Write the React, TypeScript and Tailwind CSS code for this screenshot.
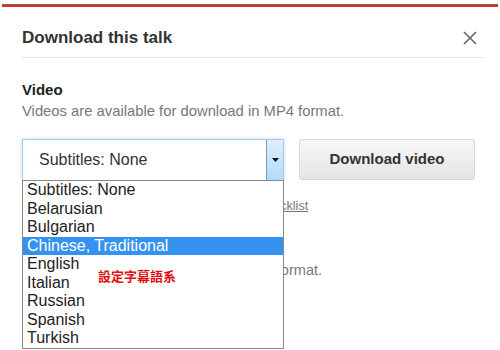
const subtitleOptions = [
  'Subtitles: None',
  'Belarusian',
  'Bulgarian',
  'Chinese, Traditional',
  'English',
  'Italian',
  'Russian',
  'Spanish',
  'Turkish',
];

export default function App() {
  return (
    <div className="relative h-[350px] w-[500px] overflow-hidden bg-white font-['Liberation_Sans',Arial,sans-serif] text-[#333]">
      <div className="px-[2px] pt-[4px]">
        <div className="h-[1px] bg-[#666]" />
        <div className="h-[2px] bg-[#e62b1e]" />
      </div>

      <div className="pl-[22px] pr-[16px]">
        <div className="flex items-center justify-between border-b border-[#e6e6e6] pb-[8px] pt-[20px]">
          <h2 className="text-[17px] font-bold leading-[22px] text-[#333]">Download this talk</h2>
          <svg width="16" height="16" viewBox="0 0 16 16" className="mr-[6px]" aria-hidden>
            <path d="M2 2 L14 14 M14 2 L2 14" stroke="#666" strokeWidth="1.6" />
          </svg>
        </div>

        <div className="pt-[23px]">
          <h3 className="text-[15px] font-bold leading-[18px] text-[#222]">Video</h3>
          <p className="mt-[3px] text-[14.8px] leading-[18px] text-[#777]">Videos are available for download in MP4 format.</p>
        </div>

        <div className="mt-[19px] flex gap-[15px]">
          <div className="flex h-[42px] w-[262px] border border-[#a9cbe8] bg-white shadow-[0_0_3px_rgba(120,170,220,0.5)]">
            <div className="flex flex-1 items-center pl-[16px] text-[16px] text-[#333]">Subtitles: None</div>
            <div className="flex w-[17px] items-center justify-center border-l border-[#6d9fcf] bg-gradient-to-b from-[#dcefff] to-[#b5daf6]">
              <svg width="7" height="4" viewBox="0 0 7 4" aria-hidden>
                <path d="M0 0 H7 L3.5 4 Z" fill="#111" />
              </svg>
            </div>
          </div>
          <button className="h-[41px] w-[176px] rounded-[3px] border border-[#d6d6d6] bg-gradient-to-b from-[#f7f7f7] to-[#e5e5e5] text-[15px] font-bold text-[#333]">
            Download video
          </button>
        </div>

        <p className="mt-[17px] text-[12.75px] leading-[16px] text-[#777]">
          <span className="underline">Please read about our subtitles download checklist</span>
        </p>

        <div className="pt-[26px]">
          <h3 className="text-[15px] font-bold leading-[18px] text-[#222]">Audio</h3>
          <p className="mt-[3px] text-[14.6px] leading-[18px] text-[#777]">Audio is available for download in MP3 format.</p>
        </div>
      </div>

      <ul className="absolute left-[22px] top-[180px] w-[262px] border border-[#8a8a8a] bg-white">
        {subtitleOptions.map((option) => (
          <li
            key={option}
            className={
              option === 'Chinese, Traditional'
                ? 'h-[18.5px] bg-[#3592f0] pl-[4px] text-[16px] leading-[18.5px] text-white'
                : 'h-[18.5px] pl-[4px] text-[16px] leading-[18.5px] text-[#222]'
            }
          >
            {option}
          </li>
        ))}
      </ul>

      <span className="absolute left-[98px] top-[268px] font-['Noto_Sans_CJK_TC',sans-serif] text-[13px] font-bold leading-[16px] text-[#e01010]">
        設定字幕語系
      </span>
    </div>
  );
}
